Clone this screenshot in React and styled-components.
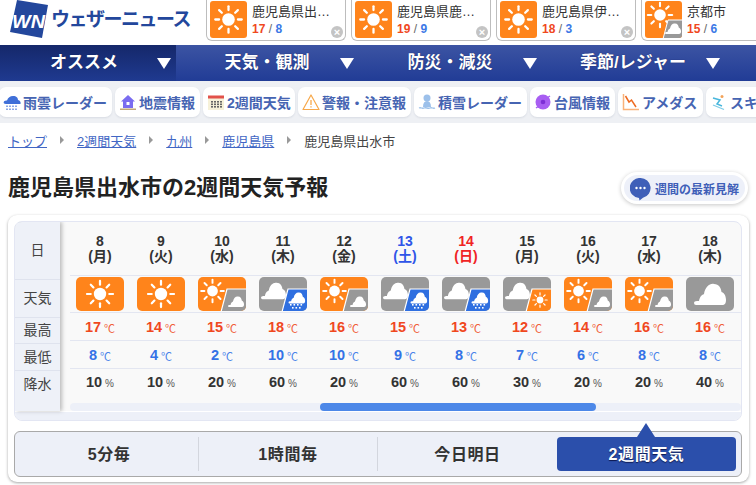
import React from 'react';
import styled, { createGlobalStyle } from 'styled-components';

const Global = createGlobalStyle`
  html, body { margin: 0; padding: 0; background: #fff; overflow: hidden; }
  body { font-family: "Liberation Sans", "Noto Sans CJK JP", sans-serif; color: #333; }
  * { box-sizing: border-box; }
`;

const Page = styled.div`width: 756px; height: 485px; overflow: hidden; display: flex; flex-direction: column;`;

/* header */
const Header = styled.header`height: 45px; display: flex; align-items: flex-start; flex: none;`;
const Brand = styled.div`width: 206px; height: 45px; flex: none; display: flex; align-items: center; padding-left: 10px;`;
const BrandName = styled.span`
  margin: -6px 0 0 3px; font-size: 19px; line-height: 24px; font-weight: 700; letter-spacing: -1.5px;
  color: #23479c; white-space: nowrap;
`;
const Chips = styled.div`display: flex; gap: 5px; flex: none;`;
const Chip = styled.div`
  position: relative; width: 140px; height: 41px; flex: none; display: flex; gap: 5px; padding: 1px 3px 0;
  border: 1px solid #bdbdbd; border-top: none; border-radius: 0 0 6px 6px; background: #fff;
`;
const ChipIcon = styled.svg`width: 37px; height: 37px; flex: none; border-radius: 3px; display: block;`;
const ChipBody = styled.div`min-width: 0; display: flex; flex-direction: column; align-items: flex-start;`;
const ChipName = styled.div`
  font-size: 13px; line-height: 20px; height: 20px; color: #333; margin-top: 1px; white-space: nowrap;
`;
const ChipTemp = styled.div`font-size: 12px; line-height: 14px; color: #666; white-space: nowrap;`;
const Hot = styled.b`color: #f0481e; font-weight: 700;`;
const Cold = styled.b`color: #3b78e6; font-weight: 700;`;
const CloseMark = styled.span`
  position: absolute; right: 2px; bottom: 2px; width: 12px; height: 12px; border-radius: 50%; background: #c4c4c4;
  color: #fff; font-size: 11px; line-height: 12px; font-weight: 700; text-align: center;
`;

/* nav */
const Nav = styled.nav`
  height: 36px; flex: none; display: grid; grid-template-columns: 176px repeat(3, 183px);
  background: linear-gradient(#3c54a3, #213c96);
`;
const NavTab = styled.div`
  display: flex; align-items: center; padding: 0 5px 0 ${p => (p.$active ? 11 : 18)}px;
  background: ${p => (p.$active ? 'linear-gradient(#15286a, #1f3a90)' : 'transparent')};
`;
const NavLabel = styled.span`
  flex: 1; text-align: center; color: #fff; font-size: 17px; font-weight: 700; line-height: 36px;
  text-shadow: 0 0 1px rgba(0,0,40,.6); white-space: nowrap;
`;
const NavArrow = styled.span`
  width: 0; height: 0; flex: none; border-left: 7px solid transparent; border-right: 7px solid transparent;
  border-top: 11px solid #fff;
`;

/* quick links */
const Links = styled.div`
  height: 42px; flex: none; display: flex; gap: 3px; padding-top: 6px; background: #eef0f4; overflow: hidden;
`;
const Pill = styled.a`
  width: ${p => p.$w}px; height: 30px; flex: none; display: flex; align-items: center; gap: 2px; padding-left: 4px;
  background: #fff; border-radius: 7px; box-shadow: 0 1px 2px rgba(60,70,110,.12); color: #4664b2;
  font-size: 14px; font-weight: 700; white-space: nowrap;
  &:first-child { margin-left: -1px; }
`;
const PillIcon = styled.svg`width: 18px; height: 18px; flex: none; display: block;`;

/* breadcrumb */
const Crumbs = styled.div`height: 34px; flex: none; display: flex; align-items: center; gap: 13px; padding-left: 8px; font-size: 13px;`;
const Crumb = styled.a`color: #4166c4; text-decoration: underline; white-space: nowrap;`;
const CrumbArrow = styled.span`
  width: 0; height: 0; flex: none; border-top: 4px solid transparent; border-bottom: 4px solid transparent;
  border-left: 4px solid #999;
`;
const CrumbNow = styled.span`color: #444; white-space: nowrap;`;

/* title */
const TitleRow = styled.div`
  height: 32px; margin: 15px 8px 11px; flex: none; display: flex; align-items: center; justify-content: space-between;
`;
const Title = styled.h1`margin: 0; font-size: 22px; line-height: 30px; font-weight: 700; color: #222; white-space: nowrap;`;
const ViewBtn = styled.a`
  width: 127px; height: 32px; display: flex; align-items: center; gap: 4px; padding-left: 6px;
  background: #edf0f9; border: 3px solid #fff; border-radius: 16px; box-shadow: 0 1px 4px rgba(0,0,0,.22);
  color: #3f5fb8; font-size: 12px; font-weight: 700; white-space: nowrap;
`;
const Bubble = styled.svg`width: 21px; height: 23px; flex: none; display: block; margin-top: 2px;`;

/* card */
const Card = styled.section`
  width: 741px; height: 267px; margin-left: 8px; flex: none; padding: 6px 7px 5px 6px; background: #fff;
  border-radius: 9px; box-shadow: 0 1px 3px rgba(0,0,0,.35);
`;
const Table = styled.div`
  height: 200px; border: 1px solid #e3e6f3; border-radius: 8px; overflow: hidden; background: #f9f9f9;
  display: flex; flex-direction: column;
`;
const TableMain = styled.div`height: 189px; flex: none; display: flex;`;
const Heads = styled.div`
  width: 45px; flex: none; background: #eef1f8; box-shadow: 2px 0 4px rgba(0,0,0,.25); position: relative;
  display: flex; flex-direction: column;
`;
const Head = styled.div`
  height: ${p => p.$h}px; flex: none; display: flex; align-items: center; justify-content: center;
  padding-bottom: ${p => p.$pb}px; color: #444; font-size: 14px;
  border-bottom: ${p => (p.$last ? 'none' : '1px solid #dfe3ee')};
`;
const Data = styled.div`width: 671px; margin-left: 9.5px; flex: none; display: flex; flex-direction: column;`;
const Row = styled.div`
  height: ${p => p.$h}px; flex: none; display: grid; grid-template-columns: repeat(11, 61px);
  padding-bottom: ${p => p.$pb || 0}px;
  border-bottom: ${p => (p.$last ? 'none' : '1px solid #e3e6f1')};
`;
const DateCell = styled.div`
  display: flex; flex-direction: column; align-items: center; justify-content: center;
  font-size: 14px; line-height: 15px; font-weight: 700;
  color: ${p => (p.$tone === 'sat' ? '#2f55e8' : p.$tone === 'sun' ? '#f02424' : '#333')};
`;
const IconCell = styled.div`display: flex; justify-content: center; padding-top: 1px;`;
const WxIcon = styled.svg`width: 48px; height: 34px; display: block; border-radius: 5px;`;
const ValueCell = styled.div`display: flex; align-items: center; justify-content: center; gap: 3px;`;
const Value = styled.span`
  font-size: 14.5px; font-weight: 700; color: ${p => (p.$kind === 'hi' ? '#f0481e' : p.$kind === 'lo' ? '#3472e6' : '#333')};
`;
const Unit = styled.span`
  font-size: ${p => (p.$kind === 'rain' ? 10 : 11)}px; padding-top: 2px;
  color: ${p => (p.$kind === 'hi' ? '#f0603a' : p.$kind === 'lo' ? '#4a84ea' : '#555')};
`;
const Track = styled.div`height: 8px; flex: none; background: #edf0f8; border-radius: 4px;`;
const Thumb = styled.div`height: 8px; width: 276px; margin-left: 250px; background: #4d88e8; border-radius: 4px;`;
const Strip = styled.div`flex: 1; background: #edf0f8; border-top: 1px solid #fff;`;

/* bottom tabs */
const Tabs = styled.div`
  height: 46px; margin-top: 10px; padding: 5px; display: grid; grid-template-columns: repeat(4, 1fr);
  background: #edf0f8; border: 1px solid #a9a9a9; border-radius: 6px;
`;
const Tab = styled.div`
  position: relative; display: flex; align-items: center; justify-content: center; font-size: 16px; letter-spacing: .6px;
  padding-bottom: 2px; font-weight: 700; color: ${p => (p.$active ? '#fff' : '#333')};
  background: ${p => (p.$active ? '#2b4fab' : 'transparent')};
  border-radius: ${p => (p.$active ? 4 : 0)}px;
  border-right: ${p => (p.$divider ? '1px solid #d3d6de' : 'none')};
  text-shadow: ${p => (p.$active ? '0 1px 1px rgba(0,0,40,.7)' : 'none')};
`;
const TabPointer = styled.span`
  position: absolute; left: 50%; top: -14px; margin-left: -9.5px; width: 0; height: 0;
  border-left: 9.5px solid transparent; border-right: 9.5px solid transparent; border-bottom: 14px solid #2b4fab;
`;

/* drawings */
const Sun = ({ cx, cy, r }) => {
  const rays = [0, 45, 90, 135, 180, 225, 270, 315];
  return (
    <g>
      <circle cx={cx} cy={cy} r={r} fill="#fff" />
      {rays.map(a => {
        const t = (a * Math.PI) / 180;
        const i = r * 1.5, o = r * 2.1;
        return (
          <line key={a} x1={cx + Math.cos(t) * i} y1={cy + Math.sin(t) * i} x2={cx + Math.cos(t) * o} y2={cy + Math.sin(t) * o}
            stroke="#fff" strokeWidth={r * 0.36} strokeLinecap="round" />
        );
      })}
    </g>
  );
};
const CLOUD = 'M2 22Q0 22 0 20Q0 18 3 18L5 18C6 13 8 12 10 11C11 4 16 0 20 1C25 1 27 5 27.5 9C31 10 32 14 32 17C32 20 31 22 28 22Z';
const Cloud = ({ x, y, s }) => <path d={CLOUD} fill="#fff" transform={`translate(${x} ${y}) scale(${s})`} />;

const PANEL = 'M29 12H49V35H23Z';
const Panel = ({ fill, children }) => (
  <g>
    <path d={PANEL} fill={fill} stroke="#fff" strokeWidth="1.2" />
    {children}
  </g>
);
const RainDots = () => (
  <g fill="#fff">
    {[31, 34.5, 38, 41.5].map(x => <rect key={x} x={x} y="27" width="1.6" height="1.6" />)}
    {[33, 36.5, 40].map(x => <rect key={x} x={x} y="30" width="1.6" height="1.6" />)}
  </g>
);

const Weather = ({ type }) => {
  const base = type === 'sun' || type === 'sunCloud' ? '#ff841b' : '#999';
  return (
    <WxIcon viewBox="0 0 48 34">
      <rect width="48" height="34" fill={base} />
      {type === 'sun' && <Sun cx={24} cy={17} r={6.2} />}
      {type === 'cloud' && <Cloud x={8} y={6} s={1} />}
      {type === 'sunCloud' && (
        <g>
          <Sun cx={14.5} cy={14} r={5.4} />
          <Panel fill="#999"><Cloud x={30} y={19} s={0.5} /></Panel>
        </g>
      )}
      {type === 'cloudRain' && (
        <g>
          <Cloud x={2} y={5} s={0.78} />
          <Panel fill="#2f6fe0">
            <Cloud x={29.5} y={15} s={0.52} />
            <RainDots />
          </Panel>
        </g>
      )}
      {type === 'cloudSun' && (
        <g>
          <Cloud x={2} y={5} s={0.78} />
          <Panel fill="#ff841b"><Sun cx={37} cy={23} r={3.4} /></Panel>
        </g>
      )}
    </WxIcon>
  );
};

const ChipSun = () => (
  <ChipIcon viewBox="0 0 37 37">
    <rect width="37" height="37" fill="#ff841b" />
    <Sun cx={18.5} cy={18.5} r={6.3} />
  </ChipIcon>
);
const ChipSunCloud = () => (
  <ChipIcon viewBox="0 0 37 37">
    <rect width="37" height="37" fill="#ff841b" />
    <Sun cx={15} cy={14} r={5.8} />
    <path d="M23 19H38V38H18Z" fill="#999" stroke="#fff" strokeWidth="1" />
    <Cloud x={20} y={22} s={0.5} />
  </ChipIcon>
);

const Logo = () => (
  <svg width="38" height="38" viewBox="0 0 38 38" style={{ flex: 'none', marginTop: -7 }}>
    <path d="M7 0L38 5L32 38L0 32Z" fill="#23479c" />
    <text x="2" y="28" fontFamily="Liberation Sans" fontStyle="italic" fontWeight="700" fontSize="18" textLength="33" lengthAdjust="spacingAndGlyphs" fill="#fff">WN</text>
  </svg>
);

const icons = {
  rain: (
    <PillIcon viewBox="0 0 18 18">
      <path d="M3 11C1 11 0 10 1 8.500C1.500 7.500 3 7.500 4 7.500C5 4.500 7 3 10 3C13.500 3 15 5 15 7C17 7.500 18 9 17.500 11Z" fill="#3f6fd8" />
      <g stroke="#3f6fd8" strokeWidth="1.200" strokeDasharray="1.500 1.500">
        <path d="M4 12.500V17M7 12.500V17M10 12.500V17M13 12.500V17" />
      </g>
    </PillIcon>
  ),
  quake: (
    <PillIcon viewBox="0 0 18 18">
      <path d="M9 2L16 8.500H14V15H4V8.500H2Z" fill="#7a6cf0" />
      <rect x="7.500" y="9" width="3" height="3" fill="#fff" />
      <rect x="1" y="15.500" width="16" height="1.500" fill="#c2a878" />
    </PillIcon>
  ),
  cal: (
    <PillIcon viewBox="0 0 18 18">
      <rect x="1" y="3" width="16" height="14" fill="#f6f1d9" />
      <rect x="1" y="2.500" width="16" height="3" fill="#e2514a" />
      <g fill="#666">
        {[5, 8, 11, 14].flatMap(x => [8, 10.500, 13].map(y => <rect key={`${x}-${y}`} x={x - 1} y={y} width="2" height="1.600" />))}
      </g>
    </PillIcon>
  ),
  warn: (
    <PillIcon viewBox="0 0 18 18">
      <path d="M9 2L17 16.500H1Z" fill="#fff" stroke="#f7a84a" strokeWidth="1.200" strokeLinejoin="round" />
      <path d="M9 7V12M9 13.200V14.600" stroke="#f7a84a" strokeWidth="1.300" />
    </PillIcon>
  ),
  snow: (
    <PillIcon viewBox="0 0 18 18">
      <circle cx="9" cy="5" r="3.500" fill="#9cc0ea" />
      <path d="M5 14C5 10 6.500 8 9 8C11.500 8 13 10 13 14Z" fill="#9cc0ea" />
      <path d="M1 15C3 14 4 16 6 15C8 14 10 16 12 15C14 14 15 16 17 15" fill="none" stroke="#9cc0ea" strokeWidth="1.300" />
    </PillIcon>
  ),
  typhoon: (
    <PillIcon viewBox="0 0 18 18">
      <circle cx="9" cy="9" r="7.500" fill="#a85ef2" />
      <circle cx="9" cy="9" r="2.300" fill="#7d2fd6" />
      <path d="M16 3L13 5M2 15L5 13" stroke="#a85ef2" strokeWidth="1.500" />
    </PillIcon>
  ),
  amedas: (
    <PillIcon viewBox="0 0 18 18">
      <path d="M1.500 1V16.500H17" fill="none" stroke="#f9b27a" strokeWidth="1.500" />
      <path d="M3.500 3L7 9L9.500 7L14 14" fill="none" stroke="#ee6a20" strokeWidth="1.500" />
    </PillIcon>
  ),
  ski: (
    <PillIcon viewBox="0 0 18 18">
      <circle cx="12" cy="3.500" r="1.500" fill="#f3a35a" />
      <path d="M3 5L10 7L7 11L12 13" fill="none" stroke="#49b7dd" strokeWidth="1.500" />
      <path d="M3 12L14 16.500" stroke="#7ccbe6" strokeWidth="1.200" />
    </PillIcon>
  ),
};

const chips = [
  { name: '鹿児島県出…', hi: 17, lo: 8, icon: <ChipSun /> },
  { name: '鹿児島県鹿…', hi: 19, lo: 9, icon: <ChipSun /> },
  { name: '鹿児島県伊…', hi: 18, lo: 3, icon: <ChipSun /> },
  { name: '京都市', hi: 15, lo: 6, icon: <ChipSunCloud /> },
];
const navs = ['オススメ', '天気・観測', '防災・減災', '季節/レジャー'];
const links = [
  ['rain', '雨雲レーダー', 113], ['quake', '地震情報', 85], ['cal', '2週間天気', 92], ['warn', '警報・注意報', 113],
  ['snow', '積雪レーダー', 113], ['typhoon', '台風情報', 85], ['amedas', 'アメダス', 85], ['ski', 'スキー', 85],
];
const days = [
  [8, '月', 'sun', 17, 8, 10], [9, '火', 'sun', 14, 4, 10], [10, '水', 'sunCloud', 15, 2, 20],
  [11, '木', 'cloudRain', 18, 10, 60], [12, '金', 'sunCloud', 16, 10, 20], [13, '土', 'cloudRain', 15, 9, 60],
  [14, '日', 'cloudRain', 13, 8, 60], [15, '月', 'cloudSun', 12, 7, 30], [16, '火', 'sunCloud', 14, 6, 20],
  [17, '水', 'sunCloud', 16, 8, 20], [18, '木', 'cloud', 16, 8, 40],
];
const tone = w => (w === '土' ? 'sat' : w === '日' ? 'sun' : 'plain');

export default function App() {
  return (
    <Page>
      <Global />
      <Header>
        <Brand>
          <Logo />
          <BrandName>ウェザーニュース</BrandName>
        </Brand>
        <Chips>
          {chips.map(c => (
            <Chip key={c.name}>
              {c.icon}
              <ChipBody>
                <ChipName>{c.name}</ChipName>
                <ChipTemp><Hot>{c.hi}</Hot> / <Cold>{c.lo}</Cold></ChipTemp>
              </ChipBody>
              <CloseMark>×</CloseMark>
            </Chip>
          ))}
        </Chips>
      </Header>
      <Nav>
        {navs.map((n, i) => (
          <NavTab key={n} $active={i === 0}>
            <NavLabel>{n}</NavLabel>
            <NavArrow />
          </NavTab>
        ))}
      </Nav>
      <Links>
        {links.map(([k, t, w]) => <Pill key={t} $w={w}>{icons[k]}{t}</Pill>)}
      </Links>
      <Crumbs>
        <Crumb>トップ</Crumb><CrumbArrow />
        <Crumb>2週間天気</Crumb><CrumbArrow />
        <Crumb>九州</Crumb><CrumbArrow />
        <Crumb>鹿児島県</Crumb><CrumbArrow />
        <CrumbNow>鹿児島県出水市</CrumbNow>
      </Crumbs>
      <TitleRow>
        <Title>鹿児島県出水市の2週間天気予報</Title>
        <ViewBtn>
          <Bubble viewBox="0 0 21 23">
            <path d="M10.500 0A10 10 0 0 1 13 19.700L9.500 22.500L9 20A10 10 0 0 1 10.500 0Z" fill="#3f5fb8" />
            <circle cx="6.500" cy="10" r="1.200" fill="#fff" />
            <circle cx="10.500" cy="10" r="1.200" fill="#fff" />
            <circle cx="14.500" cy="10" r="1.200" fill="#fff" />
          </Bubble>
          週間の最新見解
        </ViewBtn>
      </TitleRow>
      <Card>
        <Table>
          <TableMain>
            <Heads>
              <Head $h={58} $pb={4}>日</Head>
              <Head $h={38} $pb={4}>天気</Head>
              <Head $h={26} $pb={4}>最高</Head>
              <Head $h={27} $pb={3}>最低</Head>
              <Head $h={39} $pb={16} $last>降水</Head>
            </Heads>
            <Data>
              <Row $h={54}>
                {days.map(d => (
                  <DateCell key={d[0]} $tone={tone(d[1])}>
                    <span>{d[0]}</span>
                    <span>({d[1]})</span>
                  </DateCell>
                ))}
              </Row>
              <Row $h={37}>
                {days.map(d => <IconCell key={d[0]}><Weather type={d[2]} /></IconCell>)}
              </Row>
              <Row $h={28}>
                {days.map(d => <ValueCell key={d[0]}><Value $kind="hi">{d[3]}</Value><Unit $kind="hi">℃</Unit></ValueCell>)}
              </Row>
              <Row $h={28}>
                {days.map(d => <ValueCell key={d[0]}><Value $kind="lo">{d[4]}</Value><Unit $kind="lo">℃</Unit></ValueCell>)}
              </Row>
              <Row $h={34} $pb={8} $last>
                {days.map(d => <ValueCell key={d[0]}><Value $kind="rain">{d[5]}</Value><Unit $kind="rain">%</Unit></ValueCell>)}
              </Row>
              <Track><Thumb /></Track>
            </Data>
          </TableMain>
          <Strip />
        </Table>
        <Tabs>
          <Tab $divider>5分毎</Tab>
          <Tab $divider>1時間毎</Tab>
          <Tab>今日明日</Tab>
          <Tab $active>2週間天気<TabPointer /></Tab>
        </Tabs>
      </Card>
    </Page>
  );
}
